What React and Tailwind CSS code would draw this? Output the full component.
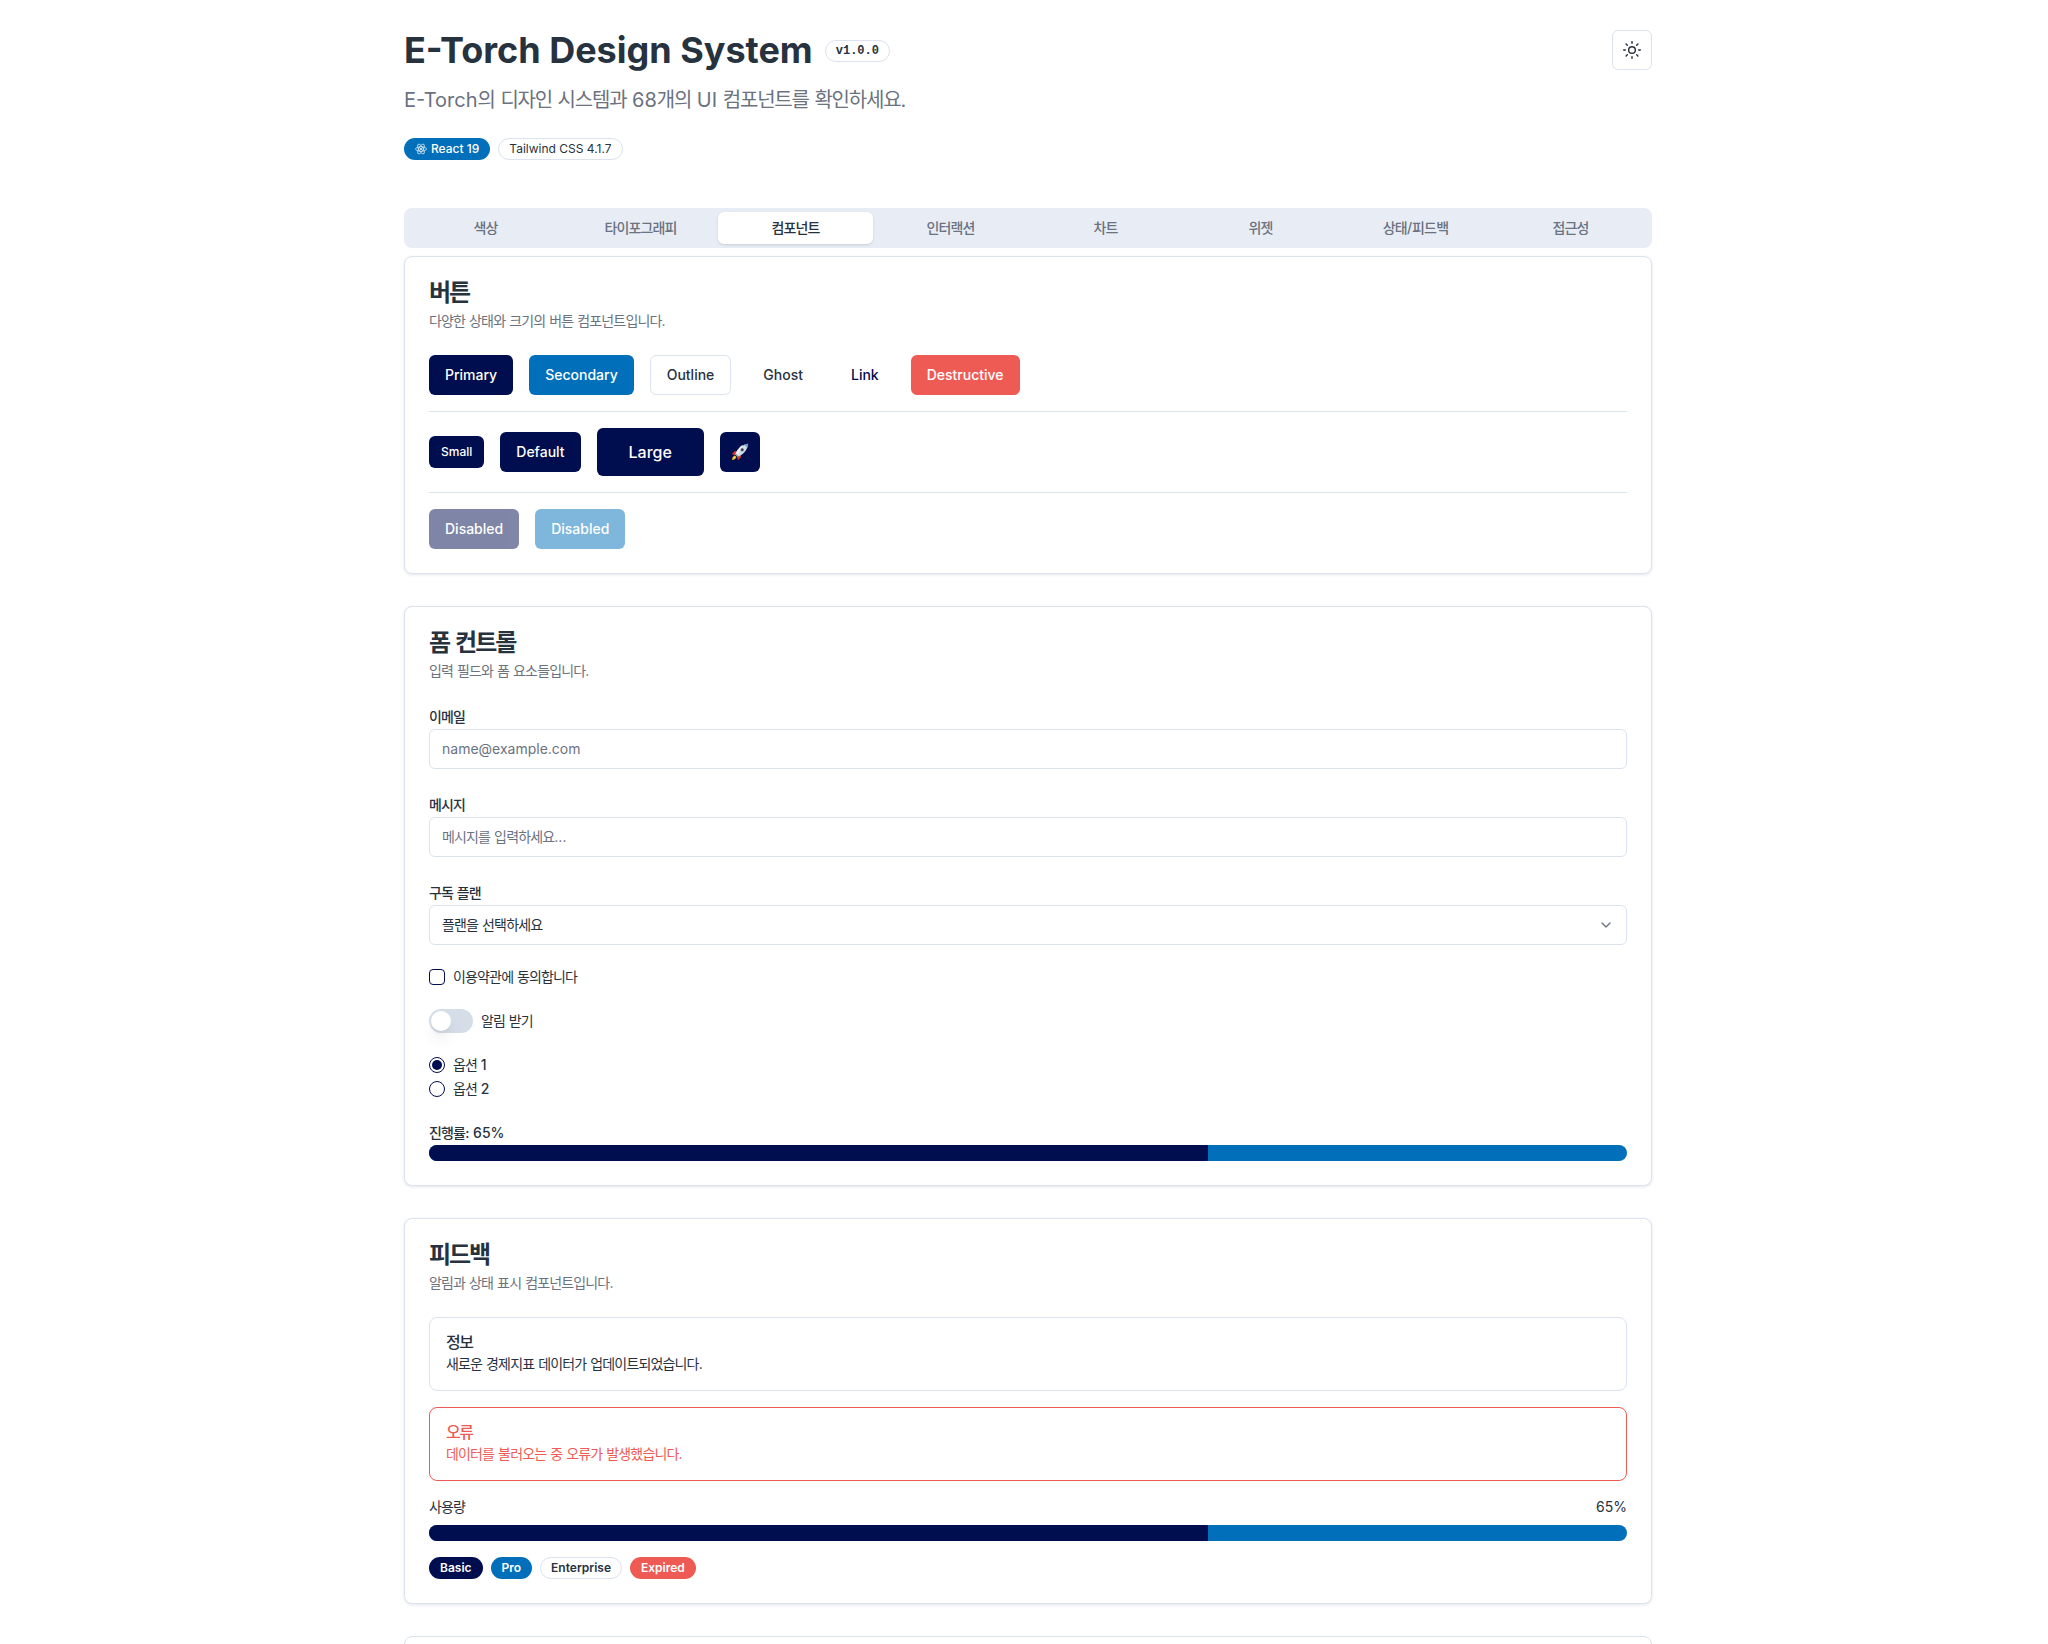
import React from "react";
import { Sun, ChevronDown } from "lucide-react";

const btnBase = "inline-flex items-center justify-center rounded-md text-sm font-medium";
const sizeDefault = "h-10 px-4";
const primary = "bg-[#000d4f] text-white";
const secondary = "bg-[#016fb9] text-white";
const destructive = "bg-[#ee5b55] text-white";

// Hangul runs sit in their own span: the reference's Korean face is a little narrower than Noto Sans CJK.
function K({ children, weight = "font-normal", tracking = "tracking-[-0.06em]" }) {
  const parts = String(children).split(/([\uac00-\ud7a3]+)/);
  return (
    <>
      {parts.map((p, i) =>
        /[\uac00-\ud7a3]/.test(p) ? (
          <span key={i} className={`${tracking} ${weight}`}>{p}</span>
        ) : (
          <span key={i}>{p}</span>
        )
      )}
    </>
  );
}

function Rocket() {
  return (
    <svg width="18" height="18" viewBox="0 0 18 18">
      <path d="M1 17 C1.2 14.6 2.2 13.2 4 12.6 L5.4 14 C4.8 15.8 3.4 16.8 1 17Z" fill="#f6c21c" />
      <path d="M2.6 15.4 C2.8 14.5 3.2 14 3.9 13.7 L4.3 14.1 C4 14.8 3.5 15.2 2.6 15.4Z" fill="#fdeb9a" />
      <path d="M0.8 11.2 L3.8 8 L6.4 8.2 L4 12Z" fill="#d8382c" />
      <path d="M10 11.8 L9.8 14.4 L6.8 17.2 L6.2 14Z" fill="#d8382c" />
      <path d="M4.4 11.6 C5.8 6.6 10.4 2 17.2 0.8 C16.2 7.6 11.6 12.4 6.6 13.8Z" fill="#cfdde8" />
      <path d="M4.4 11.6 C5.8 6.6 10.4 2 12 1.9 L6 13.2Z" fill="#eef4f8" />
      <path d="M13.2 1.7 C14.6 1.2 16 1 17.2 0.8 C17 2 16.8 3.4 16.3 4.8Z" fill="#6f9cc4" />
      <path d="M5.6 12.8 L4.4 11.6 L4.8 10.4 L7 12.6 L6.6 13.8Z" fill="#7c8b99" />
      <circle cx="11.2" cy="6.8" r="1.9" fill="#8fa3b5" />
      <circle cx="11.2" cy="6.8" r="1.2" fill="#3b2f3a" />
    </svg>
  );
}

function ReactAtom() {
  return (
    <svg width="12" height="12" viewBox="-12 -12 24 24" fill="none" stroke="currentColor" strokeWidth="1.3">
      <ellipse rx="11" ry="4.4" />
      <ellipse rx="11" ry="4.4" transform="rotate(60)" />
      <ellipse rx="11" ry="4.4" transform="rotate(120)" />
      <circle r="2" fill="currentColor" stroke="none" />
    </svg>
  );
}

function Card({ title, desc, children }) {
  return (
    <section className="rounded-lg border border-[#dbe3ee] bg-white shadow-[0_1px_3px_rgba(30,50,90,0.12)]">
      <header className="flex flex-col gap-1.5 p-6">
        <h2 className="text-2xl leading-none font-semibold text-[#27323f]"><K weight="font-semibold" tracking="tracking-[-0.085em]">{title}</K></h2>
        <p className="text-sm leading-5 text-[#6b7280]"><K>{desc}</K></p>
      </header>
      <div className="px-6 pb-6">{children}</div>
    </section>
  );
}

function Progress() {
  return (
    <div className="flex h-4 w-full overflow-hidden rounded-full bg-[#016fb9]">
      <div className="h-full w-[65%] bg-[#000d4f]" />
    </div>
  );
}

function Field({ label, children }) {
  return (
    <div className="flex flex-col">
      <label className="text-sm leading-6 font-medium text-[#27323f]"><K weight="font-medium">{label}</K></label>
      {children}
    </div>
  );
}

export default function App() {
  return (
    <div className="h-screen overflow-hidden bg-white font-['Inter','Noto_Sans_CJK_KR',sans-serif] text-[#27323f]">
      <div className="ml-[404px] w-[1248px] pt-[30px]">
        <div className="flex items-start justify-between">
          <div>
            <div className="flex items-center gap-3">
              <h1 className="text-4xl font-bold text-[#27323f]">E-Torch Design System</h1>
              <span className="mt-px rounded-full border border-[#dbe3ee] px-2.5 py-0.5 font-['Liberation_Mono',monospace] text-xs leading-4 font-bold text-[#27323f]">v1.0.0</span>
            </div>
            <p className="mt-4 text-xl leading-7 text-[#6b7280]"><K>E-Torch의 디자인 시스템과 68개의 UI 컴포넌트를 확인하세요.</K></p>
            <div className="mt-6 flex gap-2">
              <span className="inline-flex items-center gap-1 rounded-full border border-transparent bg-[#016fb9] px-2.5 py-0.5 text-xs leading-4 font-medium text-white">
                <ReactAtom />React 19
              </span>
              <span className="rounded-full border border-[#dbe3ee] px-2.5 py-0.5 text-xs leading-4 font-normal text-[#27323f]">Tailwind CSS 4.1.7</span>
            </div>
          </div>
          <button className="flex h-10 w-10 items-center justify-center rounded-md border border-[#dbe3ee] bg-white text-[#27323f]">
            <Sun className="h-5 w-5" strokeWidth={1.75} />
          </button>
        </div>

        <div className="mt-12 grid h-10 grid-cols-8 rounded-lg bg-[#e8edf5] p-1">
          {["색상", "타이포그래피", "컴포넌트", "인터랙션", "차트", "위젯", "상태/피드백", "접근성"].map((t) => (
            <div
              key={t}
              className={
                t === "컴포넌트"
                  ? "flex items-center justify-center rounded-md bg-white text-sm font-medium text-[#27323f] shadow-sm"
                  : "flex items-center justify-center text-sm font-medium text-[#6b7280]"
              }
            >
              <span><K weight="font-medium">{t}</K></span>
            </div>
          ))}
        </div>

        <div className="mt-2 flex flex-col gap-8">
          <Card title="버튼" desc="다양한 상태와 크기의 버튼 컴포넌트입니다.">
            <div className="flex flex-col gap-4">
              <div className="flex items-center gap-4">
                <button className={`${btnBase} ${sizeDefault} ${primary}`}>Primary</button>
                <button className={`${btnBase} ${sizeDefault} ${secondary}`}>Secondary</button>
                <button className={`${btnBase} ${sizeDefault} border border-[#dbe3ee] bg-white text-[#27323f]`}>Outline</button>
                <button className={`${btnBase} ${sizeDefault} text-[#27323f]`}>Ghost</button>
                <button className={`${btnBase} ${sizeDefault} text-[#000d4f]`}>Link</button>
                <button className={`${btnBase} ${sizeDefault} ${destructive}`}>Destructive</button>
              </div>
              <div className="h-px bg-[#dbe3ee]" />
              <div className="flex items-center gap-4">
                <button className={`${btnBase} h-8 px-3 text-xs! ${primary}`}>Small</button>
                <button className={`${btnBase} ${sizeDefault} ${primary}`}>Default</button>
                <button className={`${btnBase} h-12 px-8 text-base! ${primary}`}>Large</button>
                <button className={`${btnBase} h-10 w-10 ${primary}`}><Rocket /></button>
              </div>
              <div className="h-px bg-[#dbe3ee]" />
              <div className="flex items-center gap-4">
                <button className={`${btnBase} ${sizeDefault} ${primary} opacity-50`}>Disabled</button>
                <button className={`${btnBase} ${sizeDefault} ${secondary} opacity-50`}>Disabled</button>
              </div>
            </div>
          </Card>

          <Card title="폼 컨트롤" desc="입력 필드와 폼 요소들입니다.">
            <div className="flex flex-col gap-6">
              <Field label="이메일">
                <div className="flex h-10 items-center rounded-md border border-[#dbe3ee] px-3 text-sm text-[#6b7280]">name@example.com</div>
              </Field>
              <Field label="메시지">
                <div className="flex h-10 items-center rounded-md border border-[#dbe3ee] px-3 text-sm text-[#6b7280]"><span><K>메시지를 입력하세요...</K></span></div>
              </Field>
              <Field label="구독 플랜">
                <div className="flex h-10 items-center justify-between rounded-md border border-[#dbe3ee] px-3 text-sm text-[#27323f]">
                  <span><K>플랜을 선택하세요</K></span>
                  <ChevronDown className="h-4 w-4 text-[#6b7280]" />
                </div>
              </Field>
              <div className="flex h-4 items-center gap-2">
                <span className="h-4 w-4 rounded-[4px] border border-[#000d4f]" />
                <span className="text-sm font-medium text-[#27323f]"><K>이용약관에 동의합니다</K></span>
              </div>
              <div className="flex items-center gap-2">
                <span className="flex h-6 w-11 items-center rounded-full bg-[#d5dee8] p-0.5">
                  <span className="h-5 w-5 rounded-full bg-white shadow-lg" />
                </span>
                <span className="text-sm font-medium text-[#27323f]"><K>알림 받기</K></span>
              </div>
              <div className="flex flex-col gap-2">
                <div className="flex h-4 items-center gap-2">
                  <span className="flex h-4 w-4 items-center justify-center rounded-full border border-[#000d4f]">
                    <span className="h-2.5 w-2.5 rounded-full bg-[#000d4f]" />
                  </span>
                  <span className="text-sm font-medium text-[#27323f]"><K>옵션 1</K></span>
                </div>
                <div className="flex h-4 items-center gap-2">
                  <span className="h-4 w-4 rounded-full border border-[#000d4f]" />
                  <span className="text-sm font-medium text-[#27323f]"><K>옵션 2</K></span>
                </div>
              </div>
              <div className="flex flex-col">
                <span className="text-sm leading-6 font-medium text-[#27323f]"><K weight="font-medium">진행률: 65%</K></span>
                <Progress />
              </div>
            </div>
          </Card>

          <Card title="피드백" desc="알림과 상태 표시 컴포넌트입니다.">
            <div className="flex flex-col gap-4">
              <div className="rounded-lg border border-[#dbe3ee] p-4 text-[#27323f]">
                <div className="mb-1 text-base leading-4 font-medium"><K weight="font-medium" tracking="tracking-[-0.085em]">정보</K></div>
                <div className="text-sm leading-5"><K>새로운 경제지표 데이터가 업데이트되었습니다.</K></div>
              </div>
              <div className="rounded-lg border border-[#ee5b55] p-4 text-[#ee5b55]">
                <div className="mb-1 text-base leading-4 font-medium"><K weight="font-medium" tracking="tracking-[-0.085em]">오류</K></div>
                <div className="text-sm leading-5"><K>데이터를 불러오는 중 오류가 발생했습니다.</K></div>
              </div>
              <div className="flex flex-col gap-2">
                <div className="flex justify-between text-sm leading-5 text-[#27323f]">
                  <span><K>사용량</K></span>
                  <span>65%</span>
                </div>
                <Progress />
              </div>
              <div className="flex gap-2">
                <span className="rounded-full border border-transparent bg-[#000d4f] px-2.5 py-0.5 text-xs leading-4 font-semibold text-white">Basic</span>
                <span className="rounded-full border border-transparent bg-[#016fb9] px-2.5 py-0.5 text-xs leading-4 font-semibold text-white">Pro</span>
                <span className="rounded-full border border-[#dbe3ee] px-2.5 py-0.5 text-xs leading-4 font-semibold text-[#27323f]">Enterprise</span>
                <span className="rounded-full border border-transparent bg-[#ee5b55] px-2.5 py-0.5 text-xs leading-4 font-semibold text-white">Expired</span>
              </div>
            </div>
          </Card>

          <section className="h-40 rounded-lg border border-[#dbe3ee] bg-white" />
        </div>
      </div>
    </div>
  );
}
